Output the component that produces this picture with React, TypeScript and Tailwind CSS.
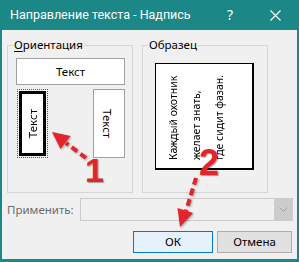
import React from "react";

export default function App() {
  const font = { fontFamily: '"Noto Sans", "Open Sans", sans-serif' };
  return (
    <div
      className="relative w-[299px] h-[262px] bg-[#1b8787] flex flex-col overflow-hidden"
      style={font}
    >
      {/* Title bar */}
      <div className="h-[30px] flex items-center pl-[10px] text-white">
        <span
          className="flex-1 text-[12.5px] leading-none whitespace-nowrap"
          style={{ fontFamily: 'Roboto, "Noto Sans", sans-serif' }}
        >
          Направление текста - Надпись
        </span>
        <span className="text-[14px] leading-none mr-[37px]">?</span>
        <svg width="11" height="11" viewBox="0 0 11 11" className="mr-[18px]">
          <path d="M0.5 0.5 L10.5 10.5 M10.5 0.5 L0.5 10.5" stroke="white" strokeWidth="1.2" />
        </svg>
      </div>

      {/* Body */}
      <div className="flex-1 mx-[2px] mb-[3px] bg-[#f0f0f0] pt-[7px] pl-[5px] pr-[5px] flex flex-col text-[11.5px] text-black">
        <div className="flex gap-[9px]">
          {/* Orientation */}
          <fieldset className="w-[126px] border border-[#d6d6d6] pl-[5px] pr-[5px] pt-[5px] pb-[34px]">
            <legend className="leading-[16px] px-[1px]">
              <span className="underline underline-offset-2">О</span>риентация
            </legend>
            <div className="ml-[3px] w-[109px] flex flex-col gap-[4px]">
              <div className="h-[27px] bg-white border border-[#a0a0a0] flex items-center justify-center">
                Текст
              </div>
              <div className="flex justify-between">
                <div className="ml-[1px] w-[31px] h-[69px] border border-dotted border-[#555] p-[1px]">
                  <div className="w-full h-full bg-white border-[3px] border-black flex items-center justify-center">
                    <span className="[writing-mode:vertical-rl] rotate-180">Текст</span>
                  </div>
                </div>
                <div className="w-[32px] h-[69px] bg-white border border-[#a0a0a0] flex items-center justify-center">
                  <span className="[writing-mode:vertical-rl] -ml-[4px]">Текст</span>
                </div>
              </div>
            </div>
          </fieldset>

          {/* Sample */}
          <fieldset className="w-[126px] border border-[#d6d6d6] pl-[5px] pr-[5px] pt-[10px]">
            <legend className="leading-[16px] px-[1px]">Образец</legend>
            <div className="ml-[7px] w-[99px] h-[107px] bg-white border-l border-t border-r-2 border-b-2 border-black pl-[6px] pb-[8px] pt-[6px] pr-[6px]">
              <div className="w-full h-full [writing-mode:vertical-rl] rotate-180 text-[10.5px] leading-[23px] whitespace-nowrap">
                <div>Каждый охотник</div>
                <div>желает знать,</div>
                <div>где сидит фазан.</div>
              </div>
            </div>
          </fieldset>
        </div>

        {/* Apply row */}
        <div className="mt-[5px] flex items-center">
          <span className="text-[#6d6d6d] w-[73px]">Применить:</span>
          <div className="flex-1 h-[23px] mr-[-1px] border border-[#cccccc] bg-[#f0f0f0] flex justify-end">
            <div className="w-[18px] h-full bg-[#cccccc] flex items-center justify-center">
              <svg width="9" height="6" viewBox="0 0 9 6">
                <path d="M0.5 0.5 L4.5 4.5 L8.5 0.5" stroke="#a3a3a3" strokeWidth="1" fill="none" />
              </svg>
            </div>
          </div>
        </div>

        {/* Buttons */}
        <div className="mt-[10px] flex justify-end gap-[4px]">
          <div className="w-[80px] h-[22px] bg-[#e5f1fb] border border-[#0078d7] flex items-center justify-center">
            ОК
          </div>
          <div className="w-[75px] h-[22px] bg-[#e1e1e1] border border-[#adadad] flex items-center justify-center">
            Отмена
          </div>
        </div>
      </div>

      {/* Red annotation arrows */}
      <svg
        className="absolute left-0 top-0 pointer-events-none"
        width="299"
        height="262"
        viewBox="0 0 299 262"
      >
        <g style={{ filter: "drop-shadow(1px 1px 1px rgba(0,0,0,0.35))" }}>
          <path d="M86 158 L66 143" stroke="#e4242b" strokeWidth="4" strokeDasharray="7 4" fill="none" />
          <polygon points="52,132 70.5,136 60.5,149" fill="#e4242b" />
          <path d="M196 178 L186 211" stroke="#e4242b" strokeWidth="4" strokeDasharray="7 4" fill="none" />
          <polygon points="180,227 193,213 177.5,208" fill="#e4242b" />
        </g>
      </svg>
      <span
        className="absolute left-[85px] top-[153px] text-[34px] leading-none font-bold text-[#e4242b] [text-shadow:1px_1px_1px_rgba(0,0,0,0.35)]"
        style={{ fontFamily: '"Liberation Sans", Arial, sans-serif' }}
      >
        1
      </span>
      <span
        className="absolute left-[199px] top-[145px] text-[36px] leading-none font-bold text-[#e4242b] [text-shadow:1px_1px_1px_rgba(0,0,0,0.35)]"
        style={{ fontFamily: '"Liberation Sans", Arial, sans-serif' }}
      >
        2
      </span>
    </div>
  );
}
